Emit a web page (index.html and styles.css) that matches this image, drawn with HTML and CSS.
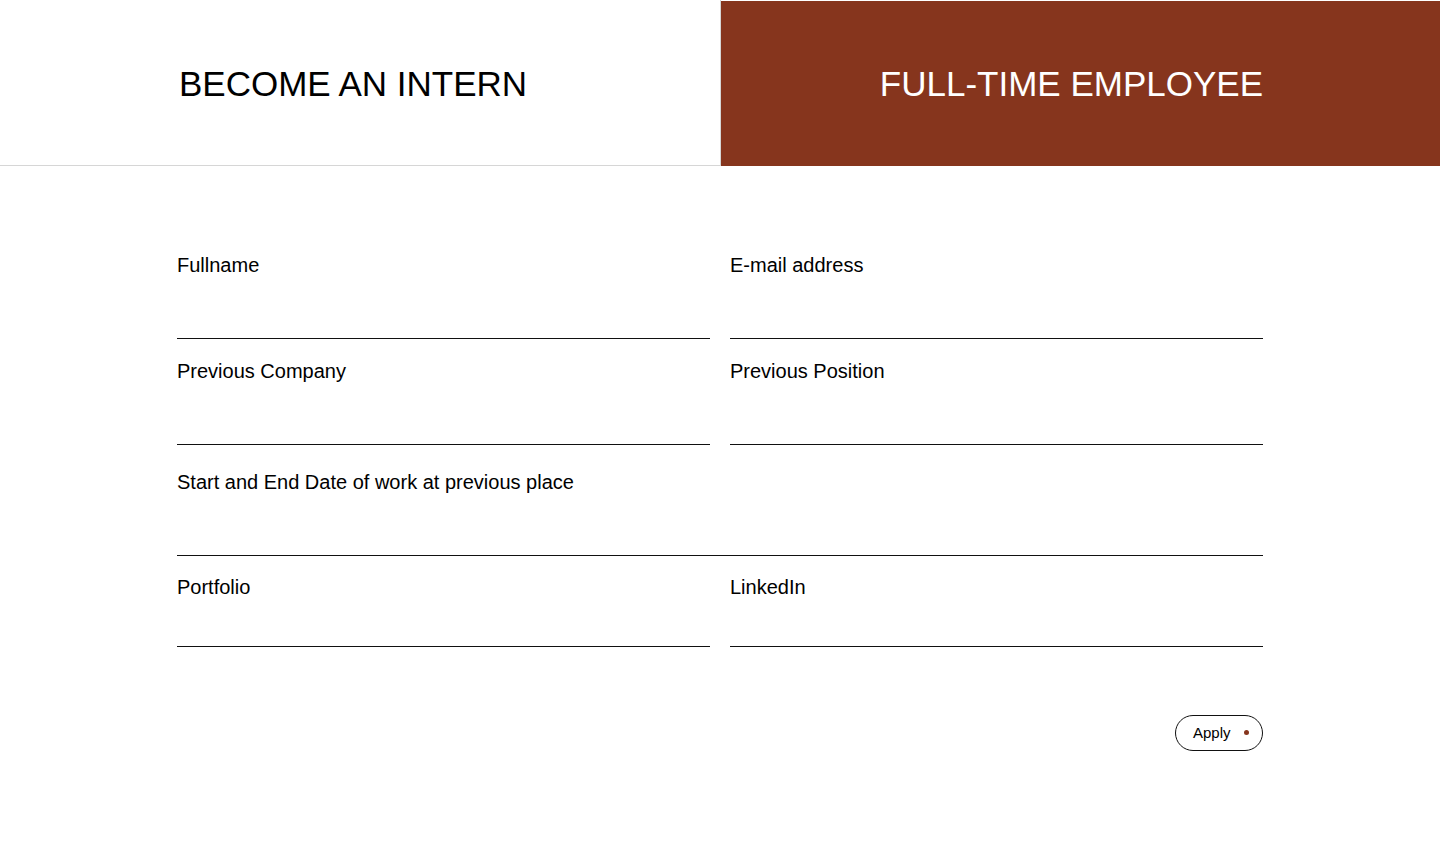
FILE: index.html
```html
<!DOCTYPE html>
<html lang="en">
<head>
<meta charset="utf-8">
<title>Apply</title>
<link rel="stylesheet" href="styles.css">
</head>
<body>
<header class="tabs">
  <div class="tab tab-left"><h2 class="tab-title">BECOME AN INTERN</h2></div>
  <div class="tab tab-right active"><h2 class="tab-title">FULL-TIME EMPLOYEE</h2></div>
</header>
<main class="form">
  <div class="row row-1">
    <label class="field"><span class="label">Fullname</span><span class="input"></span></label>
    <label class="field"><span class="label">E-mail address</span><span class="input"></span></label>
  </div>
  <div class="row row-2">
    <label class="field"><span class="label">Previous Company</span><span class="input"></span></label>
    <label class="field"><span class="label">Previous Position</span><span class="input"></span></label>
  </div>
  <div class="row row-3">
    <label class="field full"><span class="label">Start and End Date of work at previous place</span><span class="input"></span></label>
  </div>
  <div class="row row-4">
    <label class="field"><span class="label">Portfolio</span><span class="input short"></span></label>
    <label class="field"><span class="label">LinkedIn</span><span class="input short"></span></label>
  </div>
  <div class="actions">
    <button class="apply" type="button">Apply <span class="dot"></span></button>
  </div>
</main>
</body>
</html>
```
FILE: styles.css
```css
* { box-sizing: border-box; }
html, body { margin: 0; padding: 0; background: #fff; }
body { font-family: "Liberation Sans", Arial, sans-serif; color: #000; }

.tabs {
  display: flex;
  height: 166px;
}
.tab {
  display: flex;
  align-items: center;
}
.tab-left {
  flex: 0 0 721px;
  border-bottom: 1px solid #d6d6d6;
  border-right: 1px solid #d6d6d6;
  padding-left: 179px;
  padding-top: 2px;
}
.tab-right {
  flex: 1 1 0;
  background: #86351d;
  border-top: 1px solid #fff;
  justify-content: flex-end;
  padding-right: 177px;
  color: #fff;
}
.tab-title {
  margin: 0;
  font-weight: 400;
  font-size: 35px;
  line-height: 40px;
}

.form {
  padding: 0 177px;
}
.row {
  display: flex;
  gap: 20px;
}
.field {
  flex: 1 1 0;
  display: flex;
  flex-direction: column;
}
.label {
  font-size: 20px;
  line-height: 23px;
}
.input {
  display: block;
  height: 62px;
  border-bottom: 1px solid #111;
}
.input.short { height: 48px; }
.row-1 { padding-top: 88px; }
.row-2 { padding-top: 21px; }
.row-3 { padding-top: 26px; }
.row-4 { padding-top: 20px; }

.actions {
  display: flex;
  justify-content: flex-end;
  padding-top: 68px;
}
.apply {
  display: inline-flex;
  align-items: center;
  height: 36px;
  width: 88px;
  padding: 0 0 2px 17px;
  border: 1px solid #111;
  border-radius: 18px;
  background: #fff;
  font-family: "Liberation Sans", Arial, sans-serif;
  font-size: 15px;
  color: #000;
}
.dot {
  width: 5px;
  height: 5px;
  border-radius: 50%;
  background: #86351d;
  margin-left: 13px;
  margin-top: 1px;
}
```
